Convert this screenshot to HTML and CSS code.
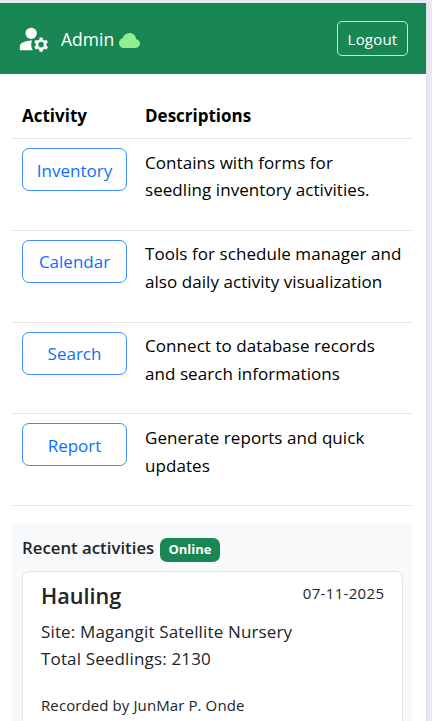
FILE: index.html
```html
<!DOCTYPE html>
<html lang="en">
<head>
<meta charset="utf-8">
<title>Admin</title>
<link rel="stylesheet" href="styles.css">
</head>
<body>
<div class="page">
  <header class="navbar">
    <svg class="user-icon" viewBox="0 0 24 24" fill="currentColor"><circle cx="10" cy="8" r="4"/><path d="M10.67 13.02C10.45 13.01 10.23 13 10 13c-2.42 0-4.68.67-6.61 1.82C2.51 15.34 2 16.32 2 17.35V20h9.26A6.963 6.963 0 0 1 10 16c0-1.070.25-2.070.67-2.980z"/><path d="M20.75 16c0-.22-.03-.42-.06-.63l1.14-1.01-1-1.73-1.45.49c-.32-.27-.68-.48-1.08-.63L18 11h-2l-.3 1.49c-.4.15-.76.36-1.08.63l-1.45-.49-1 1.73 1.14 1.01c-.03.21-.06.41-.06.63s.03.42.06.63l-1.14 1.01 1 1.73 1.45-.49c.32.27.68.48 1.08.63L16 21h2l.3-1.49c.4-.15.76-.36 1.08-.63l1.45.49 1-1.73-1.14-1.01c.03-.21.06-.41.06-.63zM17 18c-1.1 0-2-.9-2-2s.9-2 2-2 2 .9 2 2-.9 2-2 2z"/></svg>
    <span class="brand">Admin</span>
    <svg class="cloud-icon" viewBox="0 2 16 11" preserveAspectRatio="none" fill="currentColor"><path d="M4.406 3.342A5.530 5.530 0 0 1 8 2c2.690 0 4.923 2 5.166 4.579C14.758 6.804 16 8.137 16 9.773 16 11.569 14.502 13 12.687 13H3.781C1.708 13 0 11.366 0 9.318c0-1.763 1.266-3.223 2.942-3.593.143-.863.698-1.723 1.464-2.383z"/></svg>
    <button class="logout">Logout</button>
  </header>
  <main>
    <table class="activities">
      <thead><tr><th class="col-name">Activity</th><th>Descriptions</th></tr></thead>
      <tbody>
        <tr><td><button class="btn">Inventory</button></td><td>Contains with forms for<br>seedling inventory activities.</td></tr>
        <tr><td><button class="btn">Calendar</button></td><td>Tools for schedule manager and<br>also daily activity visualization</td></tr>
        <tr><td><button class="btn">Search</button></td><td>Connect to database records<br>and search informations</td></tr>
        <tr><td><button class="btn">Report</button></td><td>Generate reports and quick<br>updates</td></tr>
      </tbody>
    </table>
    <section class="recent">
      <div class="recent-head"><h2>Recent activities</h2><span class="badge">Online</span></div>
      <article class="card">
        <div class="card-head"><h3>Hauling</h3><time>07-11-2025</time></div>
        <p>Site: Magangit Satellite Nursery<br>Total Seedlings: 2130</p>
        <small>Recorded by JunMar P. Onde</small>
      </article>
    </section>
  </main>
</div>
</body>
</html>
```
FILE: styles.css
```css
* { box-sizing: border-box; }
body {
  margin: 0;
  padding-top: 3px;
  background: #e6eaf3;
  font-family: "Open Sans", sans-serif;
  font-size: 17px;
  line-height: 27.6px;
  color: #212529;
}
button { font-family: inherit; background: transparent; padding: 0; white-space: nowrap; }
.page {
  width: 427px;
  height: 718px;
  background: #fff;
  border-right: 1px solid #dadde4;
}
.navbar {
  display: flex;
  align-items: center;
  height: 71px;
  padding: 0 18px 0 17px;
  background: #198754;
  color: #fff;
}
.user-icon { width: 34px; height: 34px; }
.brand { margin: 2px 0 0 10px; font-size: 17.5px; }
.cloud-icon { width: 21px; height: 15px; margin: 4px 0 0 5px; color: #90ee90; }
.logout {
  width: 71px;
  height: 35px;
  margin-left: auto;
  border: 1px solid #d1e7dd;
  border-radius: 5px;
  color: #fff;
  font-size: 15px;
  letter-spacing: 0.2px;
}
main { padding: 20px 14px 0 12px; }
.activities {
  width: 400px;
  table-layout: fixed;
  border-collapse: separate;
  border-spacing: 0;
  color: #000;
}
.activities th, .activities td {
  padding: 8px 0 0 10px;
  border-bottom: 1px solid #e7e9eb;
  text-align: left;
  vertical-align: top;
  white-space: nowrap;
}
.activities th { height: 45px; }
.activities td { height: 91.8px; padding-top: 9.6px; letter-spacing: 0.06px; }
.col-name { width: 123px; }
.btn {
  display: block;
  width: 105px;
  height: 43px;
  margin-top: -0.5px;
  padding-top: 1px;
  border: 1px solid #3d8bfd;
  border-radius: 7px;
  color: #0d6efd;
  font-size: 17px;
}
.recent {
  height: 197px;
  margin-top: 18px;
  padding: 9px 9px 0 10px;
  background: #f8f9fa;
}
.recent-head { display: flex; align-items: center; height: 38px; padding-bottom: 9px; }
h2, h3, p { margin: 0; }
h2 { width: 133px; font-size: 16.8px; font-weight: 600; white-space: nowrap; }
.badge {
  width: 60px;
  height: 24px;
  margin: 4px 0 0 5px;
  border-radius: 7px;
  background: #198754;
  color: #fff;
  font-size: 13px;
  font-weight: 700;
  line-height: 23px;
  text-align: center;
}
.card {
  height: 150px;
  padding: 8px 18px 0;
  border: 1px solid #e3e5e8;
  border-bottom: 0;
  border-radius: 7px 7px 0 0;
  background: #fff;
}
.card-head { display: flex; justify-content: space-between; height: 36px; }
h3 { font-size: 21.6px; font-weight: 600; line-height: 31px; }
time { font-size: 15px; line-height: 27px; letter-spacing: 0.32px; margin-right: -0.3px; }
p { margin-top: 1.6px; letter-spacing: 0.15px; }
small { display: block; margin-top: 19.4px; font-size: 15px; letter-spacing: 0.1px; }
```
